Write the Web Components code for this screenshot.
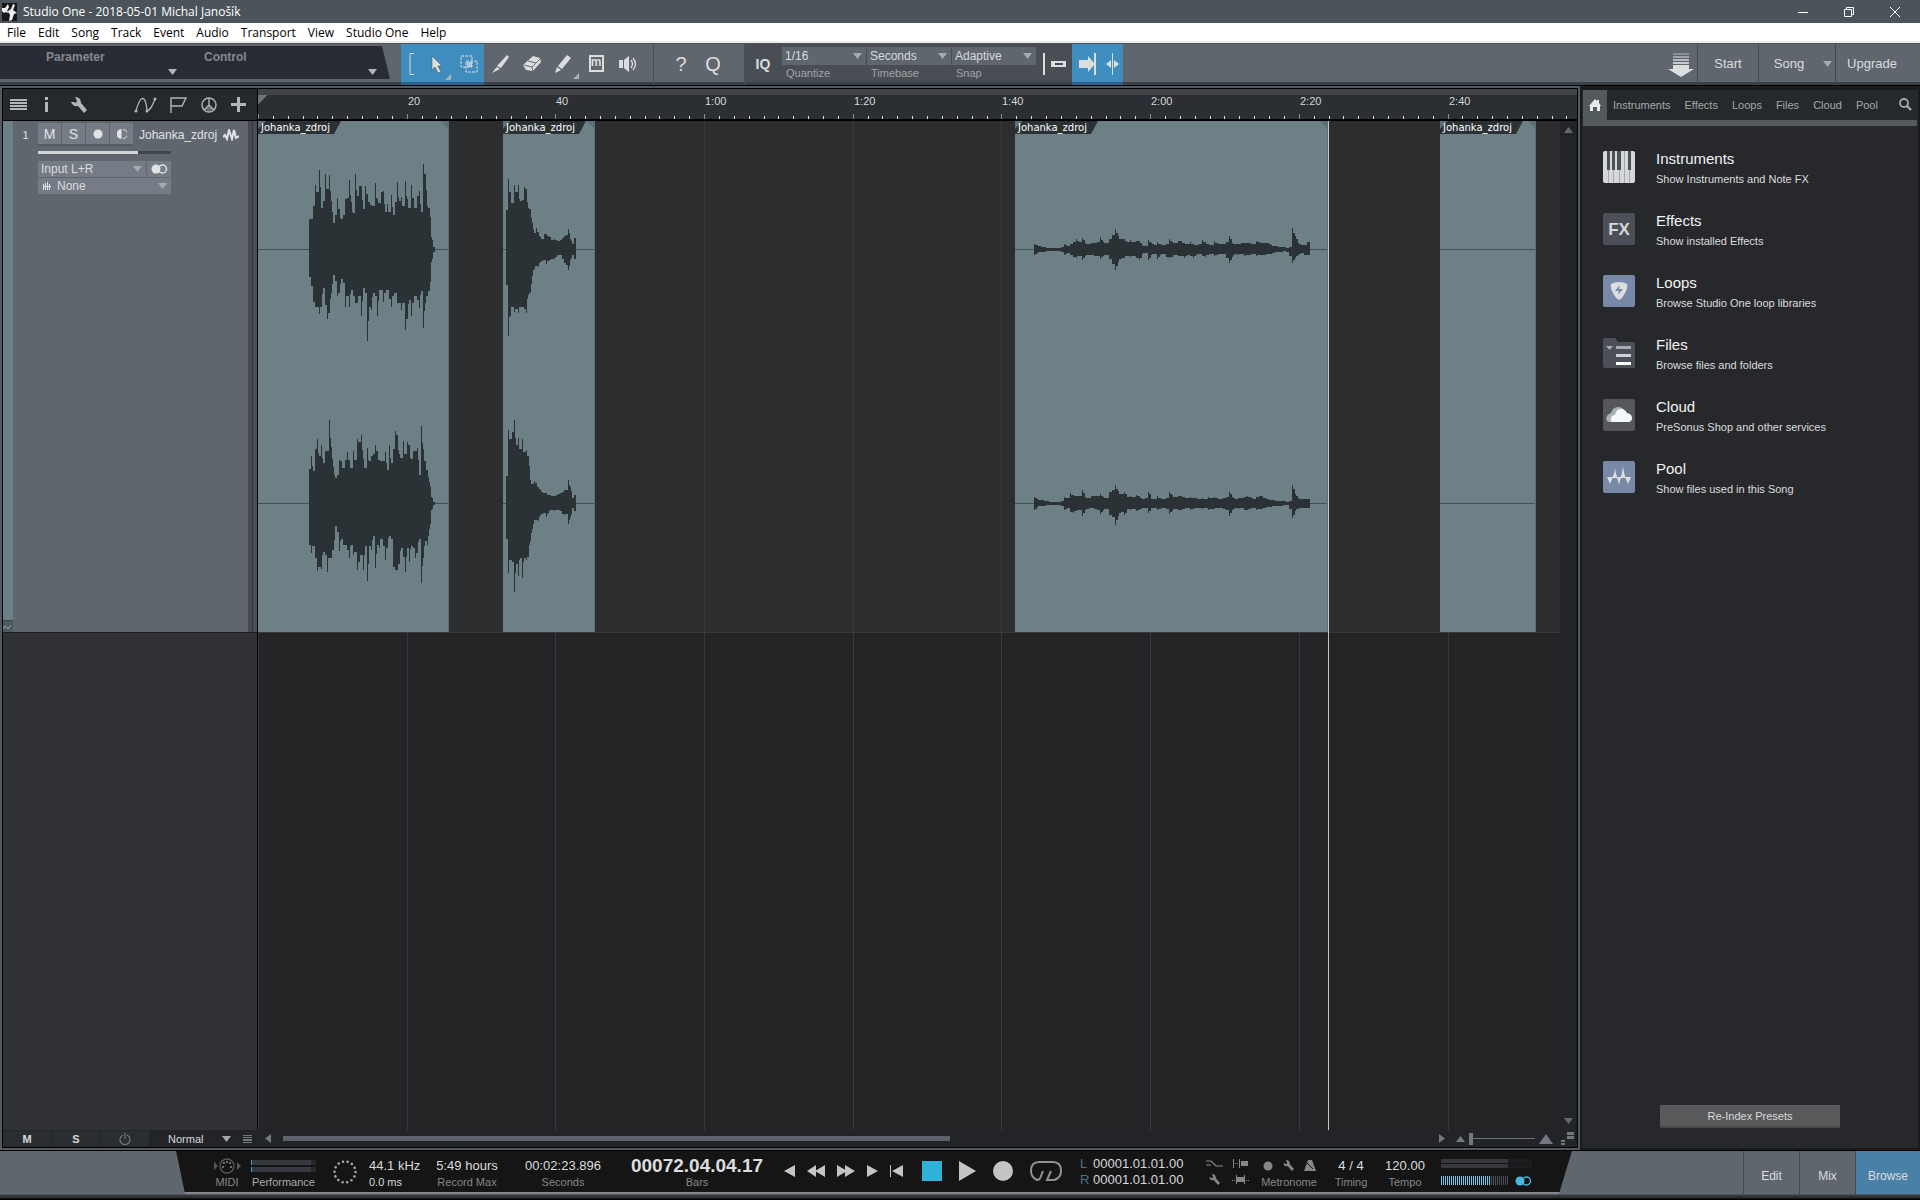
<!DOCTYPE html>
<html lang="en">
<head>
<meta charset="utf-8">
<title>Studio One - 2018-05-01 Michal Janošík</title>
<style>
  html, body { height: 100%; margin: 0; }
  body {
    display: flex;
    flex-direction: column;
    background: #1b1d1f;
    color: #d8dadc;
    font: 11px/14px "Liberation Sans", Arial, sans-serif;
    overflow: hidden;
  }
  main { flex: 1; display: flex; min-height: 0; border-bottom: 1px solid #000; }
  arrange-view { flex: 1; min-width: 0; }
</style>
</head>
<body>
<title-bar>Studio One - 2018-05-01 Michal Janošík</title-bar>
<menu-bar items="File,Edit,Song,Track,Event,Audio,Transport,View,Studio One,Help"></menu-bar>
<tool-bar></tool-bar>
<main>
  <arrange-view></arrange-view>
  <browse-panel>
    <browse-item icon="keys" heading="Instruments">Show Instruments and Note FX</browse-item>
    <browse-item icon="fx" heading="Effects">Show installed Effects</browse-item>
    <browse-item icon="loops" heading="Loops">Browse Studio One loop libraries</browse-item>
    <browse-item icon="files" heading="Files">Browse files and folders</browse-item>
    <browse-item icon="cloud" heading="Cloud">PreSonus Shop and other services</browse-item>
    <browse-item icon="pool" heading="Pool">Show files used in this Song</browse-item>
  </browse-panel>
</main>
<transport-bar></transport-bar>

<script>
// name: [width, height, svg body]
const ICONS = {
  app: [15, 18, '<rect width="15" height="18" fill="#15181a"/><path d="M0 5h3l3-4 1 3-2 4 2 1-1 1-2-1-2 1-2-2zM11 1l2 1-2 5 4 3-3 1-2 6-3 1 1-6-2-4 3-2z" fill="#eee"/>'],
  minimize: [10, 10, '<path d="M0 5.5h10" stroke="#fff"/>'],
  restore: [10, 10, '<path d="M.5 2.500h7v7h-7zM2.500 2.500v-2h7v7h-2" fill="none" stroke="#fff"/>'],
  close: [10, 10, '<path d="M0 0l10 10M10 0L0 10" stroke="#fff"/>'],
  down: [9, 6, '<path d="M0 0h9L4.500 6z"/>'],
  up: [9, 6, '<path d="M0 6h9L4.500 0z"/>'],
  upBig: [14, 10, '<path d="M0 10h14L7 0z"/>'],
  right: [6, 9, '<path d="M0 0v9l6-4.500z"/>'],
  left: [6, 9, '<path d="M6 0v9L0 4.500z"/>'],
  bracket: [5, 22, '<path d="M5 .500H1v21h4" fill="none" stroke="#d8dadc"/>'],
  cursor: [12, 18, '<path d="M1 1v14l3-3 3 6 3-1-3-6h4z" stroke="#55595f" stroke-width=".6"/>'],
  range: [18, 18, '<path d="M1 1h11v11H1z" fill="none" stroke="currentColor" stroke-dasharray="3 1"/><path d="M6 6h11v11H6z" fill="none" stroke="currentColor" stroke-dasharray="3 1"/><path d="M7 7h5v5H7z" opacity=".75"/>'],
  knife: [18, 18, '<path d="M16 0l2 2-8 11-4-2zM6 12l3 2-8 4 3-4z"/>'],
  eraser: [18, 16, '<path d="M10 0l7 2 1 4-8 9-7-1-3-5z"/><path d="M1 9l8 2 8-8M9 11l1 4M5 5l8 2" fill="none" stroke="#666b72"/>'],
  pencil: [17, 18, '<path d="M13 0l4 3-9 11-4-3zM3 12l4 3-6 3z"/>'],
  speaker: [18, 16, '<path d="M0 4h4v8H0zM5 4l5-4v16l-5-4z"/><path d="M12 4q3 4 0 8M14 2q5 6 0 12" fill="none" stroke="currentColor" stroke-width="1.300"/>'],
  corner: [6, 6, '<path d="M6 0v6H0z" fill="#a9afb6"/>'],
  snapEnd: [23, 22, '<path d="M0 0h2v22H0zM8 8h15v6H8zm4 2v2h8v-2z" fill-rule="evenodd"/>'],
  autoscroll: [17, 22, '<path d="M0 7h9V3l7 8-7 8v-4H0zM15 0h2v22h-2z"/>'],
  splitCursor: [13, 22, '<path d="M6 0h1v22H6zM5 7v8l-5-4zM8 7v8l5-4z"/>'],
  install: [26, 24, '<path d="M5 0h16v2H5z" opacity=".35"/><path d="M5 3h16v2H5z" opacity=".5"/><path d="M5 6h16v2H5z" opacity=".7"/><path d="M5 9h16v2H5z" opacity=".85"/><path d="M5 12h16v4h5l-13 8-13-8h5z"/>'],
  list: [17, 12, '<path d="M0 0h17v2H0zM0 3h17v2H0zM0 6h17v2H0zM0 9h17v2H0z"/>'],
  info: [4, 15, '<path d="M0 0h3v3H0zM0 5h3v10H0z"/>'],
  wrench: [16, 16, '<path d="M4 0q6 0 6 6l6 7-3 3-6-7Q2 10 0 5h3l2 1 1-2z"/>'],
  autom: [24, 16, '<path d="M2 14Q6-1 10 2q2 2 3 11 3 2 8-11" fill="none" stroke="currentColor" stroke-width="1.300"/><circle cx="2" cy="14" r="1.500"/><circle cx="13" cy="14" r="1.500"/><circle cx="21" cy="2" r="1.500"/>'],
  flag: [17, 16, '<path d="M1 16V1h15l-4 8H1" fill="none" stroke="currentColor" stroke-width="1.400"/>'],
  clock: [16, 16, '<circle cx="8" cy="8" r="7" fill="none" stroke="currentColor" stroke-width="1.400"/><path d="M8 1v7l-5 5M8 8l5 5" stroke="currentColor" fill="none" stroke-width="1.400"/><path d="M8 8l-4 4q4 4 8 0z" opacity=".5"/>'],
  plus: [15, 15, '<path d="M6 0h3v6h6v3H9v6H6V9H0V6h6z"/>'],
  record: [10, 10, '<circle cx="5" cy="5" r="4.500"/>'],
  monitor: [10, 10, '<path d="M4.500 0v10a5 5 0 0 1 0-10z"/><path d="M6 .500a4.500 4.500 0 0 1 0 9" fill="none" stroke="currentColor"/>'],
  wave: [16, 12, '<path d="M0 8l2-2 2 4L6 1l3 9 2-9 2 8 3-2" fill="none" stroke="currentColor" stroke-width="2"/>'],
  stereo: [17, 10, '<circle cx="5" cy="5" r="4.500"/><circle cx="11.500" cy="5" r="4" fill="none" stroke="currentColor" stroke-width="1.500"/>'],
  instr: [8, 8, '<path d="M0 2h1v6H0zM2 1h1v7H2zM4 0h1v8H4zM6 2h1v6H6z"/><path d="M0 4h8v1H0z"/>'],
  nodes: [9, 6, '<path d="M0 5l2-3 2 2 1 1 3-4" fill="none" stroke="currentColor"/>'],
  power: [12, 12, '<path d="M4 2a5 5 0 1 0 4 0M6 0v6" fill="none" stroke="currentColor" stroke-width="1.200"/>'],
  rows: [9, 8, '<path d="M0 0h9v1H0zM0 2h9v1H0zM0 4h9v2H0zM0 7h9v1H0z"/>'],
  sizes: [13, 13, '<path d="M6 0h7v3H6zM6 4h7v3H6zM0 8h4v2H0zM0 11h4v2H0z"/>'],
  home: [12, 12, '<path d="M6 0l2 2V1h2v3l2 3h-1v5H8V8H4v4H1V7H0z"/>'],
  search: [13, 13, '<circle cx="5" cy="5" r="4" fill="none" stroke="currentColor" stroke-width="1.800"/><path d="M8 8l4 4" stroke="currentColor" stroke-width="2.400"/>'],
  keys: [32, 32, '<rect width="32" height="32" rx="2" fill="#d6d7d8"/><path d="M5.500 19v13M10.500 19v13M16.500 19v13M21.500 0v32M26.500 19v13" stroke="#a4a6a9"/><path d="M4 0h3v19H4zM9 0h3v19H9zM14 0h4v19h-4zM25 0h3v19h-3z" fill="#4b5058"/>'],
  fx: [32, 32, '<rect width="32" height="32" rx="2" fill="#4b5058"/><text x="16" y="22" text-anchor="middle" font-size="17" font-weight="700" fill="#d6d7d8">FX</text>'],
  loops: [32, 32, '<rect width="32" height="32" rx="2" fill="#7789a6"/><path d="M16 7q5 0 8 2 1 2-1 7-3 7-7 9-4-2-7-9-2-5-1-7 3-2 8-2z" fill="#dcdddf"/><path d="M17 10l-5 6h4l-1 4 5-6h-4z" fill="#7789a6"/>'],
  files: [32, 32, '<path d="M2 1h10l3 4h15q2 0 2 2v24H2q-2 0-2-2V3q0-2 2-2z" fill="#4b5058"/><path d="M3 9h7l-3.500 4z" fill="#a9abb0"/><path d="M13 9h15v3H13z" fill="#a9abb0"/><path d="M13 17h15v3H13z" fill="#d0d1d3"/><path d="M13 25h15v3H13z" fill="#fff"/>'],
  cloud: [32, 32, '<rect width="32" height="32" rx="2" fill="#56575a"/><path d="M5 23q-3-3-1-6 1-2 4-3 2-6 7-6 4 0 6 3L12 23z" fill="#a9b2ba"/><path d="M9 23q-2-1-1-4 1-3 4-3 1-6 6-6 4 0 6 4 5 1 5 5 0 3-3 4z" fill="#f4f8fb"/>'],
  pool: [32, 32, '<rect width="32" height="32" rx="2" fill="#7789a6"/><path d="M4 16h6l-3 7zM9 17q2-2 3-10 1 8 3 10zM13 16h6q-2 2-3 8-1-6-3-8zM17 17q2-3 3-12 1 9 3 12zM22 16h6l-3 7z" fill="#dcdddf"/>'],
  midi: [28, 16, '<circle cx="14" cy="8" r="7" fill="none" stroke="currentColor" stroke-width="1.300"/><path d="M1 4l4 4-4 4zM24 4l4 4-4 4z"/><g fill="#8a8d90"><circle cx="10" cy="9" r="1"/><circle cx="11" cy="5" r="1"/><circle cx="14" cy="4" r="1"/><circle cx="17" cy="5" r="1"/><circle cx="18" cy="9" r="1"/></g>'],
  spinner: [24, 24, '<circle cx="12" cy="12" r="10.500" fill="none" stroke="currentColor" stroke-width="2.600" stroke-linecap="round" stroke-dasharray="0 4.712"/>'],
  tPrev: [11, 12, '<path d="M11 0v12L0 6z"/>'],
  tRew: [18, 12, '<path d="M9 0v12L0 6zM18 0v12L8 6z"/>'],
  tFwd: [18, 12, '<path d="M0 0v12l10-6zM8 0v12l10-6z"/>'],
  tNext: [11, 12, '<path d="M0 0v12l11-6z"/>'],
  tStart: [13, 12, '<path d="M0 0h1v12H0zM13 0v12L2 6z"/>'],
  tStop: [20, 20, '<path d="M0 0h20v20H0z" fill="#2fb1da"/>'],
  tPlay: [17, 20, '<path d="M0 0v20l17-10z"/>'],
  tRec: [20, 20, '<circle cx="10" cy="10" r="10"/>'],
  tLoop: [32, 20, '<path d="M13 10l-2 5q-1 4-4 4Q1 16 1 10 1 1 9 1h14q8 0 8 9 0 7-7 9h-7l4-9" fill="none" stroke="currentColor" stroke-width="2"/>'],
  preroll: [17, 8, '<path d="M0 1h5l5 5h7M0 5h5" fill="none" stroke="currentColor" stroke-width="1.200"/>'],
  punch: [15, 9, '<path d="M0 0h1v9H0zM2 4h1v1H2zM4 4h1v1H4zM6 0h1v9H6zM8 2h7v5H8z"/>'],
  punchOut: [17, 9, '<path d="M0 5h1v1H0zM2 5h1v1H2zM4 0h1v9H4zM5 2h7v5H5zM12 0h1v9h-1zM14 5h1v1h-1zM16 5h1v1h-1z"/>'],
  metro: [12, 11, '<path d="M4 0h4l4 11H0z"/><path d="M0 0l9 9" stroke="#151515"/>']
};

// base class: shadow root, shared reset, then the element's own markup
class UiElement extends HTMLElement {
  connectedCallback() {
    if (this.shadowRoot) return;
    const shadow = this.attachShadow({ mode: "open" });
    shadow.innerHTML = `
      <style>
        :host { display: block; box-sizing: border-box; }
        *, *::before, *::after { box-sizing: border-box; }
        button, select, input { margin: 0; padding: 0; border: 0; border-radius: 0; background: none; color: inherit; font: inherit; }
        button { display: flex; align-items: center; justify-content: center; }
      </style>
      ${this.render()}`;
  }
}

customElements.define("ui-icon", class extends UiElement {
  render() {
    const [w, h, body] = ICONS[this.getAttribute("name")];
    return `
      <style>
        :host { flex: none; width: ${w}px; height: ${h}px; }
        svg { display: block; fill: currentColor; }
      </style>
      <svg width="${w}" height="${h}" viewBox="0 0 ${w} ${h}" aria-hidden="true">${body}</svg>`;
  }
});

customElements.define("title-bar", class extends UiElement {
  render() {
    return `
      <style>
        :host { display: flex; align-items: center; height: 23px; padding-left: 2px; background: #4b545a; color: #fff; font: 12px/16px "Open Sans", sans-serif; }
        .name { flex: 1; padding-left: 6px; }
        button { width: 46px; height: 20px; }
      </style>
      <ui-icon name="app"></ui-icon>
      <span class="name"><slot></slot></span>
      <button aria-label="Minimize"><ui-icon name="minimize"></ui-icon></button>
      <button aria-label="Restore"><ui-icon name="restore"></ui-icon></button>
      <button aria-label="Close"><ui-icon name="close"></ui-icon></button>
      <span style="width:2px"></span>`;
  }
});

customElements.define("menu-bar", class extends UiElement {
  render() {
    const items = this.getAttribute("items").split(",");
    return `
      <style>
        :host { height: 20px; background: #fff; color: #000; border-bottom: 2px solid #eceded; font: 12px/18px "Open Sans", sans-serif; }
        nav { display: flex; gap: 12px; padding: 1px 0 0 7px; }
      </style>
      <nav>${items.map((i) => `<button>${i}</button>`).join("")}</nav>`;
  }
});

// labelled drop-down
customElements.define("drop-down", class extends UiElement {
  render() {
    const label = this.getAttribute("label");
    return `
      <style>
        :host { color: #d8dadc; }
        .box { display: grid; grid-template-columns: 1fr 18px; align-items: center; height: var(--box-height, 18px); background: var(--box, #5f666e); }
        select { grid-area: 1 / 1 / 2 / 3; width: 100%; height: 100%; padding-left: var(--indent, 3px); appearance: none; outline: 0; font-size: var(--size, 12px); }
        ui-icon { grid-area: 1 / 2; justify-self: center; color: #a6a9ad; pointer-events: none; }
        label { display: block; padding-left: 4px; line-height: 17px; color: #a1a4a8; }
      </style>
      <div class="box">
        <select id="s" aria-label="${label}"><option>${this.getAttribute("value")}</option></select>
        <ui-icon name="down"></ui-icon>
      </div>
      ${this.hasAttribute("caption") ? `<label for="s">${label}</label>` : ""}`;
  }
});

customElements.define("tool-bar", class extends UiElement {
  render() {
    return `
      <style>
        :host { display: flex; height: 43px; background: #5f666e; border-bottom: 1px solid #000; border-top: 1px solid #4b5157; box-shadow: inset 0 -3px #3b3f46; color: #dcddde; }
        .params { display: flex; width: 390px; height: 33px; margin: 2px 11px 0 0; background: #292c34; clip-path: polygon(0 0, 382px 0, 100% 100%, 0 100%); color: #85888d; font: bold 12px/14px "Liberation Sans", Arial, sans-serif; }
        .params button { display: grid; grid-template-columns: 1fr; align-content: start; text-align: left; }
        .params button:first-child { width: 180px; padding: 4px 3px 0 46px; }
        .params button:last-child { width: 200px; padding: 4px 3px 0 24px; }
        .params ui-icon { justify-self: end; margin-top: 5px; color: #b4b6b8; }
        .group { display: flex; align-items: stretch; box-shadow: inset 0 -3px #3b3f46; padding-bottom: 2px; }
        .group button { width: 32px; }
        .blue { background: #3f8cbf; box-shadow: inset 0 -3px #2d618a; }
        .blue.left { padding-left: 8px; align-items: center; }
        .blue.left button { height: 40px; }
        .group .cur { width: 39px; padding-left: 15px; }
        .group .rng { width: 31px; }
        .corner { align-self: flex-end; margin-left: 2px; margin-bottom: 4px; }
        .tools { padding-right: 9px; }
        .pen { padding-left: 5px; }
        .help { padding: 0 15px 2px 11px; border-left: 1px solid #4b5056; border-right: 1px solid #4b5056; font-size: 20px; }
        .dark { background: #494e55; gap: 1px; }
        .dark .iq { width: 36px; font: bold 14px "Liberation Sans", Arial, sans-serif; }
        drop-down { width: 84px; padding-top: 3px; }
        .mute { width: 15px; height: 17px; border: 2px solid #dcddde; font: bold 12px/11px "Liberation Sans", Arial, sans-serif; }
        .group .wide { width: 35px; }
        .group .a { width: 30px; }
        .group .b { width: 21px; }
        .pages { display: flex; margin-left: auto; font-size: 13px; }
        .pages button { height: 39px; border-left: 1px solid #43484e; }
        .pages ui-icon { align-self: center; }
        .pages button ui-icon { color: #a6a9ad; }
      </style>
      <div class="params">
        <button>Parameter<ui-icon name="down"></ui-icon></button>
        <button>Control<ui-icon name="down"></ui-icon></button>
      </div>
      <div class="group blue left">
        <ui-icon name="bracket"></ui-icon>
        <button class="cur" aria-label="Arrow tool"><ui-icon name="cursor"></ui-icon><ui-icon class="corner" name="corner"></ui-icon></button>
        <button class="rng" aria-label="Range tool"><ui-icon name="range"></ui-icon></button>
      </div>
      <div class="group tools">
        <button aria-label="Split tool"><ui-icon name="knife"></ui-icon></button>
        <button aria-label="Eraser tool"><ui-icon name="eraser"></ui-icon></button>
        <button class="pen" aria-label="Paint tool"><ui-icon name="pencil"></ui-icon><ui-icon class="corner" name="corner"></ui-icon></button>
        <button aria-label="Mute tool"><span class="mute">m</span></button>
        <button aria-label="Listen tool"><ui-icon name="speaker"></ui-icon></button>
      </div>
      <div class="group help"><button>?</button><button>Q</button></div>
      <div class="group dark">
        <button class="iq">IQ</button>
        <drop-down caption label="Quantize" value="1/16"></drop-down>
        <drop-down caption label="Timebase" value="Seconds"></drop-down>
        <drop-down caption label="Snap" value="Adaptive"></drop-down>
        <button class="wide" aria-label="Snap to end"><ui-icon name="snapEnd"></ui-icon></button>
      </div>
      <div class="group blue">
        <button class="a" aria-label="Autoscroll"><ui-icon name="autoscroll"></ui-icon></button>
        <button class="b" aria-label="Cursor follows edit"><ui-icon name="splitCursor"></ui-icon></button>
      </div>
      <div class="pages">
        <ui-icon name="install"></ui-icon>
        <button style="width:61px;margin-left:3px">Start</button>
        <button style="width:61px">Song</button>
        <button style="width:16px;border:0" aria-label="Song menu"><ui-icon name="down"></ui-icon></button>
        <button style="width:85px;padding-right:12px">Upgrade</button>
      </div>`;
  }
});

customElements.define("track-header", class extends UiElement {
  render() {
    return `
      <style>
        :host { display: flex; height: 512px; border-bottom: 1px solid #1c1e20; background: #5f666e; color: #e0e2e4; }
        .color { display: flex; flex-direction: column; width: 10px; background: #6b8087; }
        .color span { display: flex; align-items: center; height: 12px; margin-top: auto; background: #4b5b5f; border-top: 1px solid #39464a; color: #98a4a8; }
        .num { width: 25px; padding: 7px 0 0 0; text-align: center; }
        .body { flex: 1; min-width: 0; padding-top: 2px; }
        .row { display: flex; align-items: center; gap: 1px; font-size: 12px; }
        .row > button { width: 23px; height: 23px; background: #767c86; border-bottom: 2px solid #555b64; font-size: 14px; }
        .row > span { margin: 0 5px; }
        .vol { display: block; width: 133px; height: 3px; margin: 5px 0 7px; appearance: none; background: linear-gradient(90deg, #d3d4d5 100px, #42464c 0); }
        .vol::-webkit-slider-thumb { appearance: none; width: 0; }
        .io { display: grid; grid-template-columns: 108px 24px; gap: 1px; width: 133px; --box: #767c86; --box-height: 16px; --size: 12px; }
        .io button { background: #767c86; }
        .none { grid-column: 1 / 3; display: grid; grid-template-columns: 19px 1fr; align-items: center; background: #767c86; --indent: 0px; }
        .none ui-icon { margin-left: 5px; }
        .edge { width: 9px; border-left: 4px solid #45484f; background: #4b4e55; box-shadow: inset 1px 0 #34363b; }
      </style>
      <div class="color"><span><ui-icon name="nodes"></ui-icon></span></div>
      <div class="num">1</div>
      <div class="body">
        <div class="row">
          <button>M</button><button>S</button>
          <button aria-label="Record"><ui-icon name="record"></ui-icon></button>
          <button aria-label="Monitor"><ui-icon name="monitor"></ui-icon></button>
          <span>Johanka_zdroj</span><ui-icon name="wave"></ui-icon>
        </div>
        <input class="vol" type="range" aria-label="Volume" value="75">
        <div class="io">
          <drop-down label="Input" value="Input L+R"></drop-down>
          <button aria-label="Stereo"><ui-icon name="stereo"></ui-icon></button>
          <div class="none"><ui-icon name="instr"></ui-icon><drop-down label="Instrument input" value="None"></drop-down></div>
        </div>
      </div>
      <div class="edge"></div>`;
  }
});

// peaks per clip: column step, first column, then [up, down] for both channels
const PEAKS = {
  a: { step: 2, from: 51, channels: [
    ["30 30 43 64 57 79 41 48 75 60 74 48 26 34 51 40 30 34 50 51 69 47 36 75 53 63 63 40 63 55 47 44 43 66 50 46 57 58 37 45 37 54 34 47 67 48 52 43 68 50 41 64 51 41 53 58 37 85 75 43 41 12 2",
     "27 36 52 57 57 64 57 38 55 69 63 43 25 31 46 43 29 33 57 46 57 40 46 53 53 46 66 38 43 91 57 60 43 46 66 40 40 52 43 40 49 57 46 43 53 53 60 53 80 69 50 66 53 46 50 58 41 78 53 46 41 12 2"],
    ["34 47 32 54 64 47 58 40 52 52 83 56 36 25 28 43 42 35 43 51 43 35 52 43 64 61 68 44 35 55 42 47 49 58 52 43 42 42 51 33 58 40 54 72 68 49 45 62 49 61 58 44 52 52 55 28 77 54 42 33 21 6 1",
     "41 49 42 54 67 63 65 48 51 68 54 54 46 22 28 47 35 41 41 46 54 41 51 48 66 58 51 66 42 77 42 46 32 64 41 44 35 42 56 44 32 35 63 66 66 60 44 53 68 44 58 42 44 54 49 35 79 54 37 41 25 6 1"]] },
  b: { step: 2, from: 3, channels: [
    ["39 70 57 46 64 57 64 48 49 62 60 41 40 26 16 21 17 12 10 15 15 13 12 9 10 9 8 9 11 13 14 20 10 5 11",
     "35 86 66 57 62 59 63 57 57 59 63 45 43 26 19 16 17 12 11 10 14 11 10 9 9 7 5 5 9 13 15 20 10 5 9"],
    ["27 73 64 71 83 58 65 54 64 51 53 47 23 19 22 20 16 14 11 10 10 8 8 7 7 8 9 10 11 13 13 23 16 5 8",
     "35 69 56 58 88 60 72 54 74 54 56 53 37 25 16 16 17 11 10 9 13 9 6 6 7 6 6 7 10 11 10 20 13 4 7"]] },
  c: { step: 3, from: 19, channels: [
    ["5 4 3 2 1 1 1 1 1 2 5 3 5 7 10 7 11 6 5 6 6 7 12 7 6 10 14 20 13 10 10 7 9 7 8 8 4 3 9 6 4 7 5 4 5 10 7 6 8 8 6 5 7 5 4 5 9 7 5 4 8 6 5 5 7 13 6 5 5 6 6 6 6 5 8 7 6 6 6 4 3 3 2 2 1 2 21 13 6 4 4 7",
     "5 3 2 2 1 1 1 1 1 2 5 3 5 7 8 6 10 6 5 5 6 6 9 6 5 9 14 20 12 9 8 6 7 6 8 10 4 3 10 5 4 9 5 4 7 8 7 5 6 6 8 5 6 8 5 4 6 7 5 4 6 5 4 4 8 13 7 4 5 4 6 5 5 4 6 5 5 5 4 4 3 2 2 1 2 6 13 8 5 3 5 5"],
    ["6 4 3 3 2 1 1 1 1 2 6 5 10 8 7 7 13 6 5 7 7 7 9 6 5 11 13 18 12 9 11 6 7 6 8 7 4 5 11 4 4 7 5 4 5 11 8 6 7 7 6 5 6 5 5 4 5 4 6 5 6 5 4 5 6 11 6 4 5 5 6 7 6 4 6 7 7 5 4 3 3 2 2 2 1 2 18 9 5 4 4 4",
     "6 3 2 2 1 1 1 1 1 2 6 4 8 9 7 6 12 6 5 4 5 6 10 6 5 11 13 21 12 8 11 5 6 5 7 6 4 4 9 4 4 6 5 4 5 10 7 5 6 6 5 4 6 5 4 4 5 4 6 5 5 4 4 5 6 12 6 4 5 4 6 6 5 4 6 5 5 4 3 3 2 2 2 1 1 5 14 7 5 4 4 4"]] }
};

customElements.define("audio-clip", class extends UiElement {
  render() {
    const w = Number(this.getAttribute("width"));
    const data = PEAKS[this.getAttribute("peaks")];
    return `
      <style>
        :host { position: absolute; top: 0; left: ${this.getAttribute("left")}px; width: ${w}px; height: 511px; background: #6c8086; }
        svg { display: block; }
        .label { position: absolute; top: 0; left: 0; width: 83px; height: 13px; padding-left: 3px; background: linear-gradient(135deg, #5c7078 5px, #2b3236 6px); clip-path: polygon(0 0, 100% 0, 76px 100%, 0 100%); color: #fff; font: 10px/13px "DejaVu Sans", sans-serif; }
      </style>
      <svg width="${w}" height="511" shape-rendering="crispEdges">
        <path d="M0 128.500h${w}M0 382.500h${w}" stroke="#43525a"/>
        <path d="M${w - 9} 0h9v9z" fill="#5c7078"/>
        <path d="M${w - 1} 0h1v511h-1z" fill="#5c7078"/>
        <path d="${data ? this.outline(data, 0, 128) + this.outline(data, 1, 382) : ""}" fill="#2b3236"/>
      </svg>
      <div class="label">Johanka_zdroj</div>`;
  }

  // one bar per pixel column; the columns between two peaks sit a bit lower
  outline({ step, from, channels }, channel, mid) {
    const [up, down] = channels[channel].map((s) => s.split(" ").map(Number));
    const between = (list, i) => Math.round(Math.max(list[i] * 0.78, Math.min(list[i], list[Math.min(i + 1, list.length - 1)])));
    let d = "";
    up.forEach((u, i) => {
      for (let k = 0; k < step; k++) {
        const a = k ? between(up, i) : u;
        const b = k ? between(down, i) : down[i];
        d += `M${from + i * step + k} ${mid - a}h1v${a + b + 1}h-1z`;
      }
    });
    return d;
  }
});

const PX_PER_SECOND = 1189.500 / 160;
const at = (s) => Math.round(s * PX_PER_SECOND);

customElements.define("time-ruler", class extends UiElement {
  render() {
    let ticks = "";
    for (let s = 0; s <= 176; s += 2) {
      ticks += s % 20 ? `<path d="M${at(s)} 27h1v3h-1z" fill="#e4e5e6"/>` : `<path d="M${at(s)} 25h1v5h-1z" fill="#8c8f92"/>`;
    }
    const labels = ["20", "40", "1:00", "1:20", "1:40", "2:00", "2:20", "2:40"];
    return `
      <style>
        :host { position: relative; height: 32px; background: linear-gradient(#404348 6px, #2b2e33 0); border-bottom: 2px solid #000; overflow: hidden; color: #d5d7d9; }
        svg { display: block; }
        span { position: absolute; top: 5px; padding-left: 1px; line-height: 14px; }
      </style>
      <svg width="100%" height="30" shape-rendering="crispEdges"><path d="M0 6h9L0 15z" fill="#6f7378"/>${ticks}</svg>
      ${labels.map((l, i) => `<span style="left:${at(20 * (i + 1))}px">${l}</span>`).join("")}`;
  }
});

customElements.define("arrange-view", class extends UiElement {
  render() {
    let lines = "";
    for (let s = 0; s <= 160; s += 20) lines += `M${at(s)} 0h1v2000h-1z`;
    return `
      <style>
        :host { display: grid; grid-template: 32px 1fr 17px / 255px 1fr; border: 2px solid #4f5c60; outline: 1px solid #000; outline-offset: -3px; padding: 1px; background: #222426; }
        .head { display: flex; align-items: center; padding: 0 11px 0 7px; background: #26292b; border-right: 1px solid #000; border-bottom: 1px solid #000; color: #b3b5b6; }
        .left { background: #303236; border-right: 1px solid #000; }
        .canvas { display: grid; grid-template-columns: 1fr 17px; min-height: 0; }
        .lanes { position: relative; overflow: hidden; }
        .lane { position: relative; height: 512px; background: #2c2d2f; border-bottom: 1px solid #36383a; }
        .grid { position: absolute; inset: 0; width: 100%; height: 100%; fill: #37393c; }
        .playhead { position: absolute; top: 0; bottom: 0; left: 1070px; width: 1px; background: #c4c6c8; }
        .vscroll { display: flex; flex-direction: column; justify-content: space-between; align-items: center; padding: 6px 0; background: #222428; color: #656870; }
        .foot { display: flex; align-items: center; grid-column: 1 / 3; background: #222428; color: #747780; }
        .foot button { height: 15px; }
        .foot .ms { width: 48px; margin-right: 1px; background: #2b2e31; color: #d8dadc; font-weight: bold; }
        .foot .dim { color: #74777b; }
        .mode { width: 70px; margin-left: 15px; --box: #222428; --box-height: 15px; --size: 11px; }
        .hscroll { flex: 1; height: 5px; margin: 0 225px 0 12px; }
        .hscroll div { width: 667px; height: 5px; background: #5f626c; }
        .end { display: flex; align-items: center; }
        .zoom { width: 66px; height: 12px; margin: 0 4px; appearance: none; background: linear-gradient(transparent 5px, #6f727c 5px, #6f727c 6px, transparent 6px); }
        .zoom::-webkit-slider-thumb { appearance: none; width: 4px; height: 12px; background: #747780; }
      </style>
      <div class="head">
        <button aria-label="Track list"><ui-icon name="list"></ui-icon></button>
        <button style="margin-left:18px" aria-label="Inspector"><ui-icon name="info"></ui-icon></button>
        <button style="margin-left:22px" aria-label="Options"><ui-icon name="wrench"></ui-icon></button>
        <button style="margin-left:auto" aria-label="Automation"><ui-icon name="autom"></ui-icon></button>
        <button style="margin-left:12px" aria-label="Markers"><ui-icon name="flag"></ui-icon></button>
        <button style="margin-left:14px" aria-label="Tempo"><ui-icon name="clock"></ui-icon></button>
        <button style="margin-left:14px" aria-label="Add track"><ui-icon name="plus"></ui-icon></button>
      </div>
      <time-ruler></time-ruler>
      <div class="left"><track-header></track-header></div>
      <div class="canvas">
        <div class="lanes">
          <div class="lane"></div>
          <svg class="grid" shape-rendering="crispEdges"><path d="${lines}"/></svg>
          <audio-clip left="0" width="191" peaks="a"></audio-clip>
          <audio-clip left="245" width="92" peaks="b"></audio-clip>
          <audio-clip left="757" width="313" peaks="c"></audio-clip>
          <audio-clip left="1182" width="96"></audio-clip>
          <div class="playhead"></div>
        </div>
        <div class="vscroll"><ui-icon name="up"></ui-icon><ui-icon name="down"></ui-icon></div>
      </div>
      <div class="foot">
        <button class="ms">M</button><button class="ms">S</button>
        <button class="ms dim" aria-label="Power"><ui-icon name="power"></ui-icon></button>
        <drop-down class="mode" label="Automation mode" value="Normal"></drop-down>
        <ui-icon name="rows" style="margin:0 13px 0 8px"></ui-icon>
        <ui-icon name="left"></ui-icon>
        <div class="hscroll"><div></div></div>
        <div class="end">
          <ui-icon name="right" style="margin-right:11px"></ui-icon><ui-icon name="up"></ui-icon>
          <input class="zoom" type="range" aria-label="Zoom" value="0">
          <ui-icon name="upBig"></ui-icon><ui-icon name="sizes" style="margin:0 3px 0 8px"></ui-icon>
        </div>
      </div>`;
  }
});

customElements.define("browse-item", class extends UiElement {
  render() {
    return `
      <style>
        :host { display: flex; gap: 21px; height: 62px; }
        a { color: #f2f3f4; text-decoration: none; font-size: 15px; line-height: 16px; display: block; }
        p { margin: 5px 0 0; color: #dcddde; line-height: 14px; }
      </style>
      <ui-icon name="${this.getAttribute("icon")}"></ui-icon>
      <div><a href="#">${this.getAttribute("heading")}</a><p><slot></slot></p></div>`;
  }
});

customElements.define("browse-panel", class extends UiElement {
  render() {
    const tabs = ["Instruments", "Effects", "Loops", "Files", "Cloud", "Pool"];
    return `
      <style>
        :host { display: flex; flex-direction: column; width: 340px; margin-top: 2px; border: 1px solid #000; background: #27282c; outline: 2px solid #1a1c1c; outline-offset: -2px; padding: 0 2px; }
        nav { display: flex; align-items: center; gap: 14px; height: 37px; padding-right: 5px; background: #25292b; border-bottom: 6px solid #535a5d; color: #a5a8aa; font-size: 11px; }
        .home { width: 24px; height: 31px; margin-right: -8px; background: #535a5d; color: #e8e9ea; }
        .search { margin-left: auto; }
        .items { flex: 1; padding: 25px 20px 0; }
        .reindex { width: 180px; height: 23px; margin: 0 auto 21px 77px; background: #58595b; border-bottom: 2px solid #47484a; font-size: 11px; }
      </style>
      <nav>
        <button class="home" aria-label="Home"><ui-icon name="home"></ui-icon></button>
        ${tabs.map((t) => `<button>${t}</button>`).join("")}
        <button class="search" aria-label="Search"><ui-icon name="search"></ui-icon></button>
      </nav>
      <div class="items"><slot></slot></div>
      <button class="reindex">Re-Index Presets</button>`;
  }
});

// value over caption, used all over the transport
customElements.define("stat-cell", class extends UiElement {
  render() {
    return `
      <style>
        :host { display: grid; grid-template-rows: 19px 14px; justify-items: center; align-items: center; flex: none; padding-top: 5px; white-space: nowrap; }
        .value { display: flex; align-items: center; gap: 10px; font-size: 13px; color: #dcdddf; }
        .caption { color: #85878a; }
      </style>
      <span class="value"><slot></slot></span>
      <span class="caption"><slot name="caption">${this.getAttribute("caption") || ""}</slot></span>`;
  }
});

customElements.define("transport-bar", class extends UiElement {
  render() {
    const button = (icon, label) => `<button aria-label="${label}"><ui-icon name="${icon}"></ui-icon></button>`;
    return `
      <style>
        :host { display: flex; height: 49px; background: linear-gradient(#5f666e 43px, #3c4046 44px, #26282b 47px, #000 48px); }
        .rim { flex: 1; height: 43px; margin-left: 176px; background: #85888b; clip-path: polygon(0 0, 100% 0, calc(100% - 13px) 100%, 9px 100%); }
        .deck { display: flex; height: 41px; padding-left: 31px; background: #151515; }
        .perf { width: 65px; display: grid; gap: 2px; }
        .perf i { height: 5px; background: linear-gradient(90deg, #4a9cc4 1px, #363a40 1px, #363a40 60px, #26282a 0); }
        .spin { align-self: center; margin: 0 12px 0 17px; color: #a9abad; }
        .rate { display: grid; grid-template-rows: 19px 14px; align-items: center; width: 67px; padding-top: 5px; font-size: 13px; }
        .rate small { font-size: 11px; }
        .big { font: bold 19px/20px "Liberation Sans", Arial, sans-serif; }
        .btns { display: flex; align-items: center; gap: 12px; margin: 0 0 1px 20px; color: #c3c4c5; }
        .btns.large { gap: 17px; margin-left: 19px; }
        .btns.large button:last-child { color: #909293; }
        .loc { display: grid; grid-template: 16px 16px / 13px 91px; align-items: center; align-content: center; margin-left: 18px; font-size: 13px; }
        .loc b { font-weight: normal; color: #4a7286; }
        .opts { display: grid; grid-template: 16px 16px / 17px 17px; gap: 0 9px; align-content: center; align-items: center; justify-items: center; margin: 0 12px 0 22px; color: #85888a; }
        .grey { color: #85888a; }
        .meters { display: grid; grid-template: 18px 16px / 67px 17px; gap: 0 7px; align-content: center; align-items: center; color: #49b6df; }
        .out { grid-column: 1 / 3; display: grid; gap: 1px; }
        .out i { height: 4px; background: linear-gradient(90deg, #36383d 67px, #1c1d1e 0); }
        .level { height: 9px; background: repeating-linear-gradient(90deg, transparent 0 1px, #151515 1px 2px), linear-gradient(90deg, #6cc8f0 50px, #4a4e54 0); }
        .modes { display: flex; width: 348px; justify-content: flex-end; color: #dcdddf; font-size: 12px; }
        .modes button { width: 56px; height: 43px; padding-top: 7px; border-left: 1px solid #454a50; }
        .modes .on { width: 65px; background: #4980a8; }
      </style>
      <div class="rim"><div class="deck">
        <stat-cell style="width:40px" caption="MIDI"><ui-icon name="midi" style="color:#53595e"></ui-icon></stat-cell>
        <stat-cell style="margin-left:4px;width:65px"><div class="perf"><i></i><i></i></div><span slot="caption" style="color:#a9abad">Performance</span></stat-cell>
        <ui-icon class="spin" name="spinner"></ui-icon>
        <div class="rate"><span>44.1 kHz</span><small>0.0 ms</small></div>
        <stat-cell style="width:62px" caption="Record Max">5:49 hours</stat-cell>
        <stat-cell style="width:76px;margin-left:27px" caption="Seconds">00:02:23.896</stat-cell>
        <stat-cell style="width:134px;margin-left:29px" caption="Bars"><span class="big">00072.04.04.17</span></stat-cell>
        <div class="btns">
          ${button("tPrev", "Previous bar")}${button("tRew", "Rewind")}${button("tFwd", "Fast forward")}${button("tNext", "Next bar")}${button("tStart", "Return to start")}
        </div>
        <div class="btns large">
          ${button("tStop", "Stop")}${button("tPlay", "Play")}${button("tRec", "Record")}${button("tLoop", "Loop")}
        </div>
        <div class="loc"><b>L</b><span>00001.01.01.00</span><b>R</b><span>00001.01.01.00</span></div>
        <div class="opts">
          <ui-icon name="preroll"></ui-icon><ui-icon name="punch"></ui-icon>
          <svg width="11" height="11" viewBox="0 0 16 16" fill="currentColor">${ICONS.wrench[2]}</svg><ui-icon name="punchOut"></ui-icon>
        </div>
        <stat-cell style="width:56px" caption="Metronome">
          <ui-icon class="grey" name="record"></ui-icon>
          <svg width="11" height="11" viewBox="0 0 16 16" fill="#85888a">${ICONS.wrench[2]}</svg>
          <ui-icon class="grey" name="metro"></ui-icon>
        </stat-cell>
        <stat-cell style="width:34px;margin-left:17px" caption="Timing">4 / 4</stat-cell>
        <stat-cell style="width:40px;margin-left:17px" caption="Tempo">120.00</stat-cell>
        <div class="meters" style="margin-left:16px">
          <div class="out"><i></i><i></i></div>
          <div class="level"></div><ui-icon name="stereo"></ui-icon>
        </div>
      </div></div>
      <div class="modes"><button>Edit</button><button>Mix</button><button class="on">Browse</button></div>`;
  }
});
</script>
</body>
</html>
